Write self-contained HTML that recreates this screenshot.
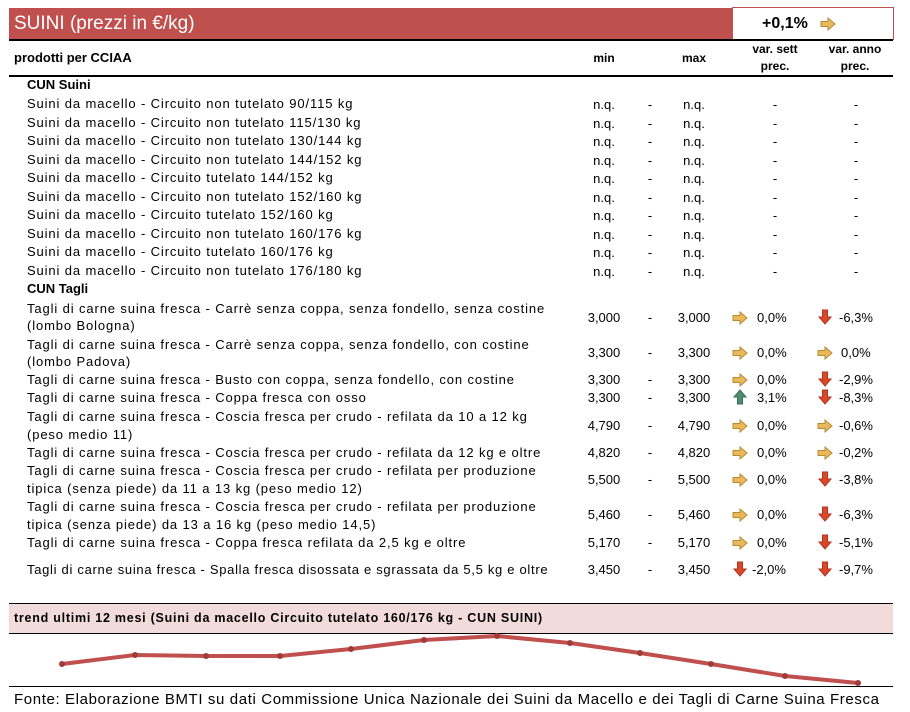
<!DOCTYPE html>
<html><head><meta charset="utf-8"><style>
body{margin:0;width:910px;height:712px;background:#fff;position:relative;overflow:hidden;font-family:"Liberation Sans",sans-serif;color:#000}
div{position:absolute;white-space:nowrap}
.t{left:27px;font-size:13px;line-height:16px;letter-spacing:0.88px}
.c{font-size:13px;line-height:16px;text-align:center}
.b{font-weight:bold}
svg{position:absolute}
</style></head><body>
<div style="left:9px;top:8px;width:723px;height:31px;background:#c0504d"></div>
<div style="left:14px;top:11px;font-size:19px;line-height:26px;color:#fff">SUINI (prezzi in €/kg)</div>
<div style="left:732px;top:7px;width:160px;height:31px;border:1px solid #c0504d;background:#fff"></div>
<div style="left:762px;top:12px;font-size:16px;line-height:24px;font-weight:bold">+0,1%</div>
<svg style="left:820px;top:17px" width="16" height="14" viewBox="0 0 16 14"><path d="M1 4.5h7V1l7 6-7 6V9.5H1z" fill="#e8b85a" stroke="#b98a35" stroke-width="1"/></svg>
<div style="left:9px;top:39px;width:884px;height:2px;background:#000"></div>
<div class="b" style="left:14px;top:50px;font-size:13px;line-height:16px">prodotti per CCIAA</div>
<div class="b c" style="left:584px;top:50px;width:40px;font-size:12px">min</div>
<div class="b c" style="left:674px;top:50px;width:40px;font-size:12px">max</div>
<div class="b c" style="left:735px;top:41px;width:80px;font-size:12px;line-height:17px">var. sett<br>prec.</div>
<div class="b c" style="left:815px;top:41px;width:80px;font-size:12px;line-height:17px">var. anno<br>prec.</div>
<div style="left:9px;top:75px;width:884px;height:2px;background:#000"></div>

<div class="b" style="left:27px;top:77px;font-size:13px;line-height:16px">CUN Suini</div>
<div class="t" style="top:96px">Suini da macello - Circuito non tutelato 90/115 kg</div>
<div class="t" style="top:115px">Suini da macello - Circuito non tutelato 115/130 kg</div>
<div class="t" style="top:133px">Suini da macello - Circuito non tutelato 130/144 kg</div>
<div class="t" style="top:152px">Suini da macello - Circuito non tutelato 144/152 kg</div>
<div class="t" style="top:170px">Suini da macello - Circuito tutelato 144/152 kg</div>
<div class="t" style="top:189px">Suini da macello - Circuito non tutelato 152/160 kg</div>
<div class="t" style="top:207px">Suini da macello - Circuito tutelato 152/160 kg</div>
<div class="t" style="top:226px">Suini da macello - Circuito non tutelato 160/176 kg</div>
<div class="t" style="top:244px">Suini da macello - Circuito tutelato 160/176 kg</div>
<div class="t" style="top:263px">Suini da macello - Circuito non tutelato 176/180 kg</div>

<div class="c" style="left:584px;top:96px;width:40px;line-height:18.5px">n.q.<br>n.q.<br>n.q.<br>n.q.<br>n.q.<br>n.q.<br>n.q.<br>n.q.<br>n.q.<br>n.q.</div>
<div class="c" style="left:640px;top:96px;width:20px;line-height:18.5px">-<br>-<br>-<br>-<br>-<br>-<br>-<br>-<br>-<br>-</div>
<div class="c" style="left:674px;top:96px;width:40px;line-height:18.5px">n.q.<br>n.q.<br>n.q.<br>n.q.<br>n.q.<br>n.q.<br>n.q.<br>n.q.<br>n.q.<br>n.q.</div>
<div class="c" style="left:765px;top:96px;width:20px;line-height:18.5px">-<br>-<br>-<br>-<br>-<br>-<br>-<br>-<br>-<br>-</div>
<div class="c" style="left:846px;top:96px;width:20px;line-height:18.5px">-<br>-<br>-<br>-<br>-<br>-<br>-<br>-<br>-<br>-</div>

<div class="b" style="left:27px;top:281px;font-size:13px;line-height:16px">CUN Tagli</div>
<div class="t" style="top:301px">Tagli di carne suina fresca - Carrè senza coppa, senza fondello, senza costine</div>
<div class="t" style="top:318px">(lombo Bologna)</div>
<div class="t" style="top:337px">Tagli di carne suina fresca - Carrè senza coppa, senza fondello, con costine</div>
<div class="t" style="top:354px">(lombo Padova)</div>
<div class="t" style="top:372px">Tagli di carne suina fresca - Busto con coppa, senza fondello, con costine</div>
<div class="t" style="top:390px">Tagli di carne suina fresca - Coppa fresca con osso</div>
<div class="t" style="top:409px">Tagli di carne suina fresca - Coscia fresca per crudo - refilata da 10 a 12 kg</div>
<div class="t" style="top:427px">(peso medio 11)</div>
<div class="t" style="top:445px">Tagli di carne suina fresca - Coscia fresca per crudo - refilata da 12 kg e oltre</div>
<div class="t" style="top:463px">Tagli di carne suina fresca - Coscia fresca per crudo - refilata per produzione</div>
<div class="t" style="top:481px">tipica (senza piede) da 11 a 13 kg (peso medio 12)</div>
<div class="t" style="top:499px">Tagli di carne suina fresca - Coscia fresca per crudo - refilata per produzione</div>
<div class="t" style="top:517px">tipica (senza piede) da 13 a 16 kg (peso medio 14,5)</div>
<div class="t" style="top:535px">Tagli di carne suina fresca - Coppa fresca refilata da 2,5 kg e oltre</div>
<div class="t" style="top:562px;letter-spacing:0.7px">Tagli di carne suina fresca - Spalla fresca disossata e sgrassata da 5,5 kg e oltre</div>

<svg width="0" height="0"><defs>
<symbol id="r" viewBox="0 0 16 14"><path d="M1 4.5h7V1l7 6-7 6V9.5H1z" fill="#e8b85a" stroke="#b98a35" stroke-width="1"/></symbol>
<symbol id="d" viewBox="0 0 14 16"><path d="M4.5 1h5v7H13l-6 7-6-7h3.5z" fill="#d9482b" stroke="#b0351c" stroke-width="1"/></symbol>
<symbol id="u" viewBox="0 0 14 16"><path d="M4.5 15h5V8H13L7 1 1 8h3.5z" fill="#4f8c72" stroke="#3a6e58" stroke-width="1"/></symbol>
</defs></svg>

<div class="c" style="left:580px;top:310px;width:48px">3,000</div><div class="c" style="left:640px;top:310px;width:20px">-</div><div class="c" style="left:670px;top:310px;width:48px">3,000</div>
<svg style="left:732px;top:311px" width="16" height="14"><use href="#r"/></svg><div style="left:757px;top:310px;font-size:13px;line-height:16px">0,0%</div>
<svg style="left:818px;top:309px" width="14" height="16"><use href="#d"/></svg><div style="left:839px;top:310px;font-size:13px;line-height:16px">-6,3%</div>

<div class="c" style="left:580px;top:345px;width:48px">3,300</div><div class="c" style="left:640px;top:345px;width:20px">-</div><div class="c" style="left:670px;top:345px;width:48px">3,300</div>
<svg style="left:732px;top:346px" width="16" height="14"><use href="#r"/></svg><div style="left:757px;top:345px;font-size:13px;line-height:16px">0,0%</div>
<svg style="left:817px;top:346px" width="16" height="14"><use href="#r"/></svg><div style="left:841px;top:345px;font-size:13px;line-height:16px">0,0%</div>

<div class="c" style="left:580px;top:372px;width:48px">3,300</div><div class="c" style="left:640px;top:372px;width:20px">-</div><div class="c" style="left:670px;top:372px;width:48px">3,300</div>
<svg style="left:732px;top:373px" width="16" height="14"><use href="#r"/></svg><div style="left:757px;top:372px;font-size:13px;line-height:16px">0,0%</div>
<svg style="left:818px;top:371px" width="14" height="16"><use href="#d"/></svg><div style="left:839px;top:372px;font-size:13px;line-height:16px">-2,9%</div>

<div class="c" style="left:580px;top:390px;width:48px">3,300</div><div class="c" style="left:640px;top:390px;width:20px">-</div><div class="c" style="left:670px;top:390px;width:48px">3,300</div>
<svg style="left:733px;top:389px" width="14" height="16"><use href="#u"/></svg><div style="left:757px;top:390px;font-size:13px;line-height:16px">3,1%</div>
<svg style="left:818px;top:389px" width="14" height="16"><use href="#d"/></svg><div style="left:839px;top:390px;font-size:13px;line-height:16px">-8,3%</div>

<div class="c" style="left:580px;top:418px;width:48px">4,790</div><div class="c" style="left:640px;top:418px;width:20px">-</div><div class="c" style="left:670px;top:418px;width:48px">4,790</div>
<svg style="left:732px;top:419px" width="16" height="14"><use href="#r"/></svg><div style="left:757px;top:418px;font-size:13px;line-height:16px">0,0%</div>
<svg style="left:817px;top:419px" width="16" height="14"><use href="#r"/></svg><div style="left:839px;top:418px;font-size:13px;line-height:16px">-0,6%</div>

<div class="c" style="left:580px;top:445px;width:48px">4,820</div><div class="c" style="left:640px;top:445px;width:20px">-</div><div class="c" style="left:670px;top:445px;width:48px">4,820</div>
<svg style="left:732px;top:446px" width="16" height="14"><use href="#r"/></svg><div style="left:757px;top:445px;font-size:13px;line-height:16px">0,0%</div>
<svg style="left:817px;top:446px" width="16" height="14"><use href="#r"/></svg><div style="left:839px;top:445px;font-size:13px;line-height:16px">-0,2%</div>

<div class="c" style="left:580px;top:472px;width:48px">5,500</div><div class="c" style="left:640px;top:472px;width:20px">-</div><div class="c" style="left:670px;top:472px;width:48px">5,500</div>
<svg style="left:732px;top:473px" width="16" height="14"><use href="#r"/></svg><div style="left:757px;top:472px;font-size:13px;line-height:16px">0,0%</div>
<svg style="left:818px;top:471px" width="14" height="16"><use href="#d"/></svg><div style="left:839px;top:472px;font-size:13px;line-height:16px">-3,8%</div>

<div class="c" style="left:580px;top:507px;width:48px">5,460</div><div class="c" style="left:640px;top:507px;width:20px">-</div><div class="c" style="left:670px;top:507px;width:48px">5,460</div>
<svg style="left:732px;top:508px" width="16" height="14"><use href="#r"/></svg><div style="left:757px;top:507px;font-size:13px;line-height:16px">0,0%</div>
<svg style="left:818px;top:506px" width="14" height="16"><use href="#d"/></svg><div style="left:839px;top:507px;font-size:13px;line-height:16px">-6,3%</div>

<div class="c" style="left:580px;top:535px;width:48px">5,170</div><div class="c" style="left:640px;top:535px;width:20px">-</div><div class="c" style="left:670px;top:535px;width:48px">5,170</div>
<svg style="left:732px;top:536px" width="16" height="14"><use href="#r"/></svg><div style="left:757px;top:535px;font-size:13px;line-height:16px">0,0%</div>
<svg style="left:818px;top:534px" width="14" height="16"><use href="#d"/></svg><div style="left:839px;top:535px;font-size:13px;line-height:16px">-5,1%</div>

<div class="c" style="left:580px;top:562px;width:48px">3,450</div><div class="c" style="left:640px;top:562px;width:20px">-</div><div class="c" style="left:670px;top:562px;width:48px">3,450</div>
<svg style="left:733px;top:561px" width="14" height="16"><use href="#d"/></svg><div style="left:752px;top:562px;font-size:13px;line-height:16px">-2,0%</div>
<svg style="left:818px;top:561px" width="14" height="16"><use href="#d"/></svg><div style="left:839px;top:562px;font-size:13px;line-height:16px">-9,7%</div>

<div style="left:9px;top:603px;width:884px;height:29px;background:#f2dcdb;border-top:1px solid #000;border-bottom:1px solid #000"></div>
<div class="b" style="left:14px;top:610px;font-size:12.5px;line-height:16px;letter-spacing:0.75px">trend ultimi 12 mesi (Suini da macello Circuito tutelato 160/176 kg - CUN SUINI)</div>
<svg style="left:0;top:0" width="910" height="712">
<polyline points="62,664 135,655 206,656 280,656 351,649 424,640 497,636 570,643 640,653 711,664 785,676 858,683" fill="none" stroke="#c0504d" stroke-width="4" stroke-linejoin="round"/>
<g fill="#a23a38">
<circle cx="62" cy="664" r="3"/><circle cx="135" cy="655" r="3"/><circle cx="206" cy="656" r="3"/><circle cx="280" cy="656" r="3"/><circle cx="351" cy="649" r="3"/><circle cx="424" cy="640" r="3"/><circle cx="497" cy="636" r="3"/><circle cx="570" cy="643" r="3"/><circle cx="640" cy="653" r="3"/><circle cx="711" cy="664" r="3"/><circle cx="785" cy="676" r="3"/><circle cx="858" cy="683" r="3"/>
</g></svg>
<div style="left:9px;top:686px;width:884px;height:1px;background:#000"></div>
<div style="left:14px;top:690px;font-size:15px;line-height:20px;letter-spacing:0.62px">Fonte: Elaborazione BMTI su dati Commissione Unica Nazionale dei Suini da Macello e dei Tagli di Carne Suina Fresca</div>
</body></html>
